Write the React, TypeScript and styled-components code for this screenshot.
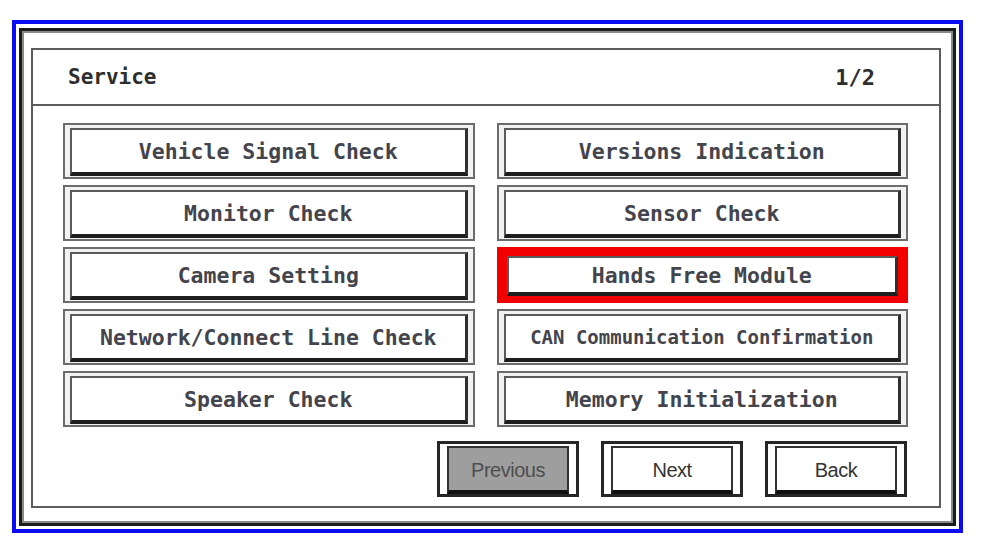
import React from 'react';
import styled, { createGlobalStyle } from 'styled-components';

type MenuItem = { label: string; selected?: boolean; small?: boolean };

const menuItems: MenuItem[] = [
  { label: 'Vehicle Signal Check' },
  { label: 'Versions Indication' },
  { label: 'Monitor Check' },
  { label: 'Sensor Check' },
  { label: 'Camera Setting' },
  { label: 'Hands Free Module', selected: true },
  { label: 'Network/Connect Line Check' },
  { label: 'CAN Communication Confirmation', small: true },
  { label: 'Speaker Check' },
  { label: 'Memory Initialization' },
];

const App = () => {
  return (
    <>
      <GlobalStyle />
      <ScreenFrame>
        <DarkFrame>
          <Panel>
            <Header>
              <HeaderTitle>Service</HeaderTitle>
              <PageIndicator>1/2</PageIndicator>
            </Header>
            <Body>
              <MenuGrid>
                {menuItems.map((item) => (
                  <MenuButton key={item.label} selected={item.selected}>
                    <MenuFace small={item.small}>{item.label}</MenuFace>
                  </MenuButton>
                ))}
              </MenuGrid>
              <NavRow>
                <NavButton>
                  <NavFace disabled>Previous</NavFace>
                </NavButton>
                <NavButton>
                  <NavFace>Next</NavFace>
                </NavButton>
                <NavButton>
                  <NavFace>Back</NavFace>
                </NavButton>
              </NavRow>
            </Body>
          </Panel>
        </DarkFrame>
      </ScreenFrame>
    </>
  );
};

export default App;

const GlobalStyle = createGlobalStyle`
  * {
    box-sizing: border-box;
  }
  body {
    margin: 0;
    background: #fff;
    font-family: "DejaVu Sans Mono", monospace;
  }
`;

const ScreenFrame = styled.div`
  width: 951px;
  margin: 20px 0 0 12px;
  border: 4px solid #0c0cf2;
  padding: 4px 3px 3px 3px;
  background: #fff;
`;

const DarkFrame = styled.div`
  border: 3px solid #1c1c1c;
  box-shadow: inset 0 0 0 2px #8a8a8a;
  padding: 17px 12px 15px 9px;
`;

const Panel = styled.div`
  border: 2px solid #5c5c5c;
  background: #fff;
`;

const Header = styled.div`
  height: 56px;
  border-bottom: 2px solid #5c5c5c;
  display: flex;
  align-items: center;
  justify-content: space-between;
  padding: 0 64px 0 35px;
  color: #2e2e2e;
  font-weight: bold;
`;

const HeaderTitle = styled.span`
  font-size: 21px;
`;

const PageIndicator = styled.span`
  font-size: 22px;
`;

const Body = styled.div`
  padding: 17px 31px 9px 30px;
`;

const MenuGrid = styled.div`
  display: grid;
  grid-template-columns: 1fr 1fr;
  grid-auto-rows: 56px;
  column-gap: 22px;
  row-gap: 6px;
`;

const MenuButton = styled.div<{ selected?: boolean }>`
  display: flex;
  border: 2px solid ${({ selected }) => (selected ? '#f20000' : '#6c6c6c')};
  background: ${({ selected }) => (selected ? '#f20000' : '#f2f2f2')};
  padding: ${({ selected }) => (selected ? '7px 8px 5px 8px' : '3px 5px 1px 5px')};
`;

const MenuFace = styled.div<{ small?: boolean }>`
  flex: 1;
  display: flex;
  align-items: center;
  justify-content: center;
  background: #fff;
  border-top: 2px solid #5a5a5a;
  border-left: 2px solid #5a5a5a;
  border-right: 3px solid #303030;
  border-bottom: 4px solid #1e1e1e;
  color: #44444c;
  font-weight: bold;
  font-size: ${({ small }) => (small ? '19px' : '21.5px')};
  white-space: nowrap;
`;

const NavRow = styled.div`
  display: flex;
  justify-content: flex-end;
  gap: 22px;
  margin-top: 14px;
  padding-right: 1px;
`;

const NavButton = styled.div`
  width: 142px;
  height: 56px;
  display: flex;
  border: 3px solid #262626;
  background: #fff;
  padding: 2px 7px 0 7px;
`;

const NavFace = styled.div<{ disabled?: boolean }>`
  flex: 1;
  display: flex;
  align-items: center;
  justify-content: center;
  padding-top: 3px;
  background: ${({ disabled }) => (disabled ? '#9e9e9e' : '#fff')};
  border: 2px solid #333;
  border-bottom: 4px solid #111;
  color: ${({ disabled }) => (disabled ? '#4e4e4e' : '#333')};
  font-family: "Liberation Sans", Arial, sans-serif;
  font-size: 20px;
  letter-spacing: -0.5px;
`;
